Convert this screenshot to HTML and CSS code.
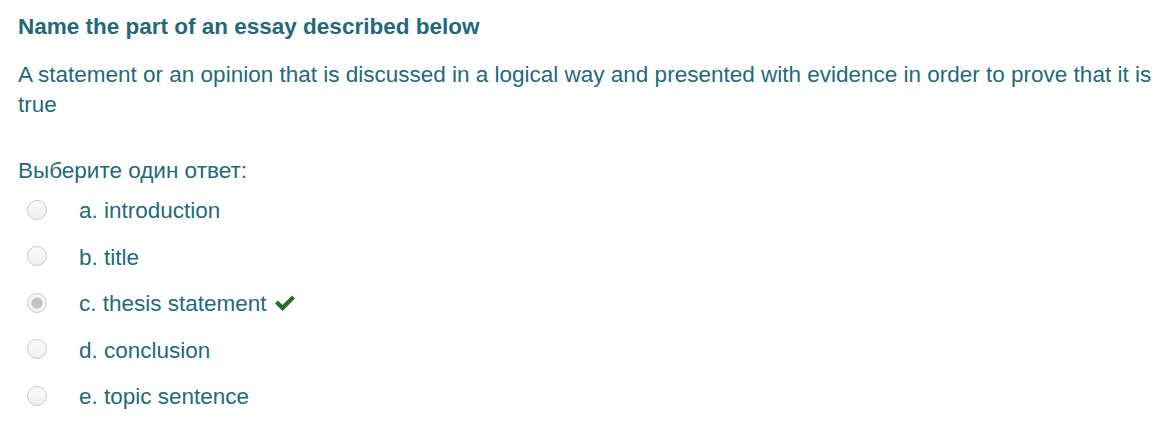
FILE: index.html
```html
<!DOCTYPE html>
<html lang="ru">
<head>
    <meta charset="UTF-8">
    <title>Вопрос</title>
    <link rel="stylesheet" href="styles.css">
</head>
<body>
    <div class="question">
        <h3 class="qtitle">Name the part of an essay described below</h3>
        <p class="qtext">A statement or an opinion that is discussed in a logical way and presented with evidence in order to prove that it is true</p>

        <div class="prompt">Выберите один ответ:</div>
        <div class="answers">
            <div class="option">
                <span class="radio"></span>
                <span class="label">a. introduction</span>
            </div>
            <div class="option">
                <span class="radio"></span>
                <span class="label">b. title</span>
            </div>
            <div class="option">
                <span class="radio checked"></span>
                <span class="label">c. thesis statement</span>
                <svg class="tick" viewBox="0 0 24 18" width="24" height="18">
                    <path d="M2 9.5 L5 6.5 L9.5 11 L19 1.5 L22 4.5 L9.5 17 Z" fill="#2e6a2b"/>
                </svg>
            </div>
            <div class="option">
                <span class="radio"></span>
                <span class="label">d. conclusion</span>
            </div>
            <div class="option">
                <span class="radio"></span>
                <span class="label">e. topic sentence</span>
            </div>
        </div>
    </div>
</body>
</html>
```

FILE: styles.css
```css
body { margin: 0; background: #fff; font-family: "Liberation Sans", Arial, sans-serif; color: #1f6a7b; }
.question { padding: 13px 18px 0 18px; }
.qtitle { margin: 0; font-size: 22.5px; font-weight: bold; line-height: 28px; color: #23697a; }
.qtext { margin: 19px 0 0 0; font-size: 22.5px; line-height: 30px; }
.prompt { margin-top: 36px; font-size: 22.5px; line-height: 30px; }
.answers { margin-top: 2px; }
.option { display: flex; align-items: center; height: 46.5px; font-size: 22.5px; }
.radio { width: 18px; height: 18px; margin: -3px 32px 0 9px; border: 1px solid #cbcbcb; border-radius: 50%; background: linear-gradient(#fbfbfb, #efefef); box-sizing: content-box; }
.radio.checked { background: radial-gradient(circle, #c2c2c2 0, #c2c2c2 5px, #f3f3f3 6px); }
.label { line-height: 30px; }
.tick { margin-left: 6px; margin-top: -2px; }
```
